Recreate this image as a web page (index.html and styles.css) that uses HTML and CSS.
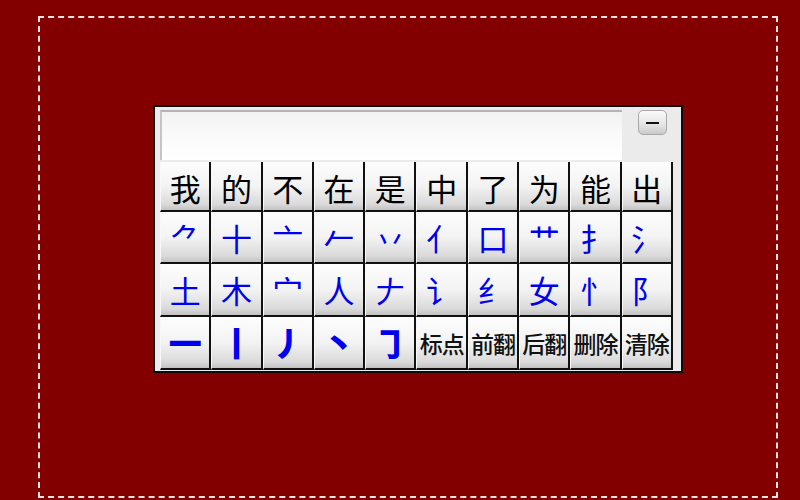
FILE: index.html
```html
<!DOCTYPE html>
<html lang="zh">
<head>
<meta charset="utf-8">
<title>手写输入键盘</title>
<link rel="stylesheet" href="styles.css">
</head>
<body>
<div class="frame">
  <div class="panel">
    <div class="top">
      <div class="input"></div>
      <div class="minbtn"><span class="dash"></span></div>
    </div>
    <div class="grid">
      <div class="key word">我</div>
      <div class="key word">的</div>
      <div class="key word">不</div>
      <div class="key word">在</div>
      <div class="key word">是</div>
      <div class="key word">中</div>
      <div class="key word">了</div>
      <div class="key word">为</div>
      <div class="key word">能</div>
      <div class="key word">出</div>

      <div class="key rad">⺈</div>
      <div class="key rad">十</div>
      <div class="key rad">亠</div>
      <div class="key rad">𠂉</div>
      <div class="key rad">丷</div>
      <div class="key rad">亻</div>
      <div class="key rad">口</div>
      <div class="key rad">艹</div>
      <div class="key rad">扌</div>
      <div class="key rad">氵</div>

      <div class="key rad">土</div>
      <div class="key rad">木</div>
      <div class="key rad">宀</div>
      <div class="key rad">人</div>
      <div class="key rad">𠂇</div>
      <div class="key rad">讠</div>
      <div class="key rad">纟</div>
      <div class="key rad">女</div>
      <div class="key rad">忄</div>
      <div class="key rad">阝</div>

      <div class="key stroke">一</div>
      <div class="key stroke">丨</div>
      <div class="key stroke">丿</div>
      <div class="key stroke">丶</div>
      <div class="key stroke">㇆</div>
      <div class="key cmd">标点</div>
      <div class="key cmd">前翻</div>
      <div class="key cmd">后翻</div>
      <div class="key cmd">删除</div>
      <div class="key cmd">清除</div>
    </div>
  </div>
</div>
</body>
</html>
```
FILE: styles.css
```css
html, body {
  margin: 0;
  padding: 0;
}
body {
  width: 800px;
  height: 500px;
  overflow: hidden;
  background: #820000;
  font-family: "Noto Sans CJK SC", "Noto Sans", sans-serif;
}
.frame {
  box-sizing: border-box;
  margin: 16px 0 0 38px;
  width: 740px;
  height: 482px;
  border: 2px dashed #f6e2e2;
  padding: 87px 0 0 113px;
}
.panel {
  box-sizing: border-box;
  width: 530px;
  height: 268px;
  border: 2px solid #0c0c0c;
  background: #ebebeb;
  padding: 3px 8px 1px 5px;
  display: flex;
  flex-direction: column;
}
.top {
  height: 52px;
  display: flex;
  align-items: flex-start;
  gap: 16px;
}
.input {
  box-sizing: border-box;
  width: 462px;
  height: 50px;
  border-top: 2px solid #b4b4b4;
  border-left: 2px solid #c4c4c4;
  background: linear-gradient(#f2f2f2, #fafafa 50%, #ffffff);
}
.minbtn {
  box-sizing: border-box;
  width: 29px;
  height: 25px;
  border: 1px solid #a8a8a8;
  border-radius: 5px;
  background: linear-gradient(#fafafa, #e4e4e4 60%, #c9c9c9);
  display: flex;
  align-items: center;
  justify-content: center;
}
.dash {
  width: 13px;
  height: 2px;
  background: #111;
}
.grid {
  display: grid;
  grid-template-columns: repeat(10, 1fr);
  grid-template-rows: 50px 52px 53px 53px;
}
.key {
  box-sizing: border-box;
  border-right: 2px solid #111;
  border-bottom: 2px solid #111;
  border-left: 1px solid #f8f8f8;
  background: linear-gradient(#fdfdfd, #f3f3f3 50%, #dadada 88%, #c2c2c2);
  display: flex;
  align-items: center;
  justify-content: center;
  line-height: 1;
}
.word {
  color: #000;
  font-size: 31px;
  padding-top: 2px;
}
.rad {
  color: #0000f0;
  font-size: 31px;
}
.stroke {
  color: #0000f0;
  font-size: 33px;
  font-weight: 900;
}
.cmd {
  color: #111;
  font-size: 23px;
  font-weight: 500;
  letter-spacing: -1px;
  white-space: nowrap;
  padding-top: 2px;
}
```
